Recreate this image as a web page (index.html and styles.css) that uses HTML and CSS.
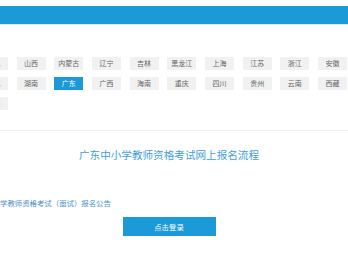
FILE: index.html
```html
<!DOCTYPE html>
<html lang="zh-CN">
<head>
<meta charset="utf-8">
<title>广东中小学教师资格考试网上报名流程</title>
<link rel="stylesheet" href="styles.css">
</head>
<body>
<div class="page">
  <div class="header"></div>
  <div class="provinces">
    <span class="chip">河北</span><span class="chip">山西</span><span class="chip">内蒙古</span><span class="chip">辽宁</span><span class="chip">吉林</span><span class="chip">黑龙江</span><span class="chip">上海</span><span class="chip">江苏</span><span class="chip">浙江</span><span class="chip">安徽</span>
    <span class="chip">湖北</span><span class="chip">湖南</span><span class="chip active">广东</span><span class="chip">广西</span><span class="chip">海南</span><span class="chip">重庆</span><span class="chip">四川</span><span class="chip">贵州</span><span class="chip">云南</span><span class="chip">西藏</span>
    <span class="chip">新疆</span>
  </div>
  <div class="divider"></div>
  <div class="content">
    <h1 class="title">广东中小学教师资格考试网上报名流程</h1>
    <p class="notice">学教师资格考试（面试）报名公告</p>
    <div class="actions"><a class="btn">点击登录</a></div>
  </div>
</div>
</body>
</html>
```
FILE: styles.css
```css
html, body {
  margin: 0;
  padding: 0;
  background: #ffffff;
}
body {
  width: 348px;
  height: 261px;
  overflow: hidden;
  font-family: "Noto Sans CJK SC", "Noto Sans", sans-serif;
}
.page {
  width: 348px;
  overflow: hidden;
}
.header {
  margin-top: 6px;
  height: 18px;
  background: #1b9ad8;
  border-bottom: 1px solid #d2eaf7;
}
.provinces {
  margin-top: 32px;
  margin-left: -25.5px;
  display: grid;
  grid-template-columns: repeat(10, 37.7px);
  row-gap: 7px;
}
.chip {
  justify-self: center;
  width: 29px;
  height: 13px;
  line-height: 13px;
  background: #f1f1f1;
  color: #666666;
  font-size: 7px;
  text-align: center;
  white-space: nowrap;
  overflow: hidden;
}
.chip.active {
  background: #1b9ad8;
  color: #ffffff;
}
.divider {
  margin-top: 20px;
  height: 1px;
  background: #f0f0f0;
}
.content {
  width: 338px;
}
.title {
  margin: 17px 0 0;
  font-size: 10.6px;
  line-height: 14px;
  font-weight: normal;
  color: #3f9fdc;
  text-align: center;
}
.notice {
  margin: 36px 0 0;
  font-size: 7.4px;
  line-height: 10px;
  color: #4a90c8;
  white-space: nowrap;
}
.actions {
  margin-top: 9px;
  display: flex;
  justify-content: center;
}
.btn {
  display: block;
  width: 93px;
  height: 19px;
  line-height: 19px;
  background: #1b9ad8;
  color: #ffffff;
  font-size: 7.4px;
  text-align: center;
}
```
